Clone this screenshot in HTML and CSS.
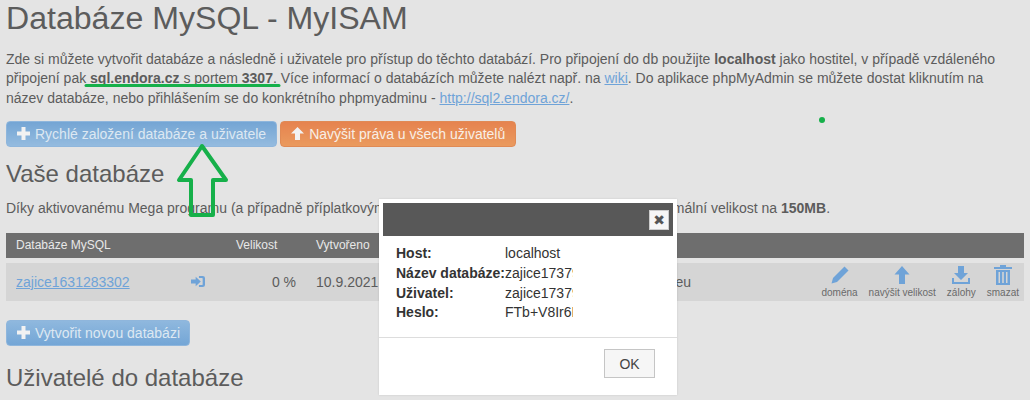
FILE: index.html
```html
<!DOCTYPE html>
<html lang="cs">
<head>
<meta charset="utf-8">
<title>Databáze MySQL - MyISAM</title>
<link rel="stylesheet" href="styles.css">
</head>
<body>
<main class="page">
  <h1 class="title">Databáze MySQL - MyISAM</h1>
  <p class="intro">Zde si můžete vytvořit databáze a následně i uživatele pro přístup do těchto databází. Pro připojení do db použijte <b>localhost</b> jako hostitel, v případě vzdáleného<br>připojení pak <b>sql.endora.cz</b> s portem <b>3307</b>. Více informací o databázích můžete nalézt např. na <a href="#">wiki</a>. Do aplikace phpMyAdmin se můžete dostat kliknutím na<br>název databáze, nebo přihlášením se do konkrétního phpmyadminu - <a href="#">http://sql2.endora.cz/</a>.</p>
  <div class="actions">
    <a class="btn btn-blue" href="#"><svg class="btn-icon" viewBox="0 0 13 13"><path d="M4.500 0h4v4.500H13v4H8.500V13h-4V8.500H0v-4h4.500z"/></svg>Rychlé založení databáze a uživatele</a>
    <a class="btn btn-orange" href="#"><svg class="btn-icon" viewBox="0 0 13 13"><path d="M6.500 0L13 6.500H9V13H4V6.500H0z"/></svg>Navýšit práva u všech uživatelů</a>
  </div>
  <h2 class="section-title">Vaše databáze</h2>
  <p class="note">Díky aktivovanému Mega programu (a případně příplatkovým balíčkům) máte také možnost navýšit na maximální velikost na <b>150MB</b>.</p>
  <div class="table">
    <div class="row row-head">
      <span class="c-name">Databáze MySQL</span>
      <span class="c-login"></span>
      <span class="c-size">Velikost</span>
      <span class="c-date">Vytvořeno</span>
    </div>
    <div class="row row-body">
      <a class="c-name db-link" href="#">zajice1631283302</a>
      <span class="c-login"><svg class="login-icon" viewBox="0 0 15 13" preserveAspectRatio="none"><path d="M0 4.200h5V1L10.500 6.500 5 12V8.800H0z"/><path d="M8.500 0H12.500A2.500 2.500 0 0 1 15 2.500v8A2.500 2.500 0 0 1 12.500 13H8.500v-2.500h3.500a.5 .5 0 0 0 .5-.5V3a.5 .5 0 0 0-.5-.5H8.500z"/></svg></span>
      <span class="c-size size-value">0 %</span>
      <span class="c-date">10.9.2021</span>
      <span class="c-host">zajice1631283302.mysql.endora.eu</span>
      <div class="tools">
        <a class="tool" href="#"><svg viewBox="0 0 20 20"><path d="M14.500 1.500l4 4L7 17 1.500 18.500 3 13z"/></svg>doména</a>
        <a class="tool" href="#"><svg viewBox="0 0 20 20"><path d="M10 1l7.500 8.500H13V19H7V9.500H2.500z"/></svg>navýšit velikost</a>
        <a class="tool" href="#"><svg viewBox="0 0 20 20"><path d="M7 1h6v7h4l-7 7-7-7h4z"/><path d="M1 13h2v4h14v-4h2v6H1z"/></svg>zálohy</a>
        <a class="tool" href="#"><svg viewBox="0 0 20 20"><path d="M7 0h6v2h6v2H1V2h6z"/><path fill-rule="evenodd" d="M3 5h14v15H3zM5.500 7v11h1.500V7zM9.200 7v11h1.600V7zM13 7v11h1.500V7z"/></svg>smazat</a>
      </div>
    </div>
  </div>
  <a class="btn btn-blue-alt" href="#"><svg class="btn-icon" viewBox="0 0 13 13"><path d="M4.500 0h4v4.500H13v4H8.500V13h-4V8.500H0v-4h4.500z"/></svg>Vytvořit novou databázi</a>
  <h2 class="section-title section-users">Uživatelé do databáze</h2>
</main>

<svg class="marks" viewBox="0 0 1030 400" aria-hidden="true">
  <path class="mark-line" d="M86 85.500H279"/>
  <path class="mark-arrow" d="M202 146L179 180H191V215H213V180H226Z"/>
  <circle class="mark-dot" cx="822" cy="120" r="3"/>
</svg>

<div class="modal" role="dialog">
  <div class="modal-head"><button class="modal-close" type="button">✖</button></div>
  <dl class="modal-body">
    <dt>Host:</dt><dd>localhost</dd>
    <dt>Název databáze:</dt><dd>zajice17379</dd>
    <dt>Uživatel:</dt><dd>zajice17379</dd>
    <dt>Heslo:</dt><dd>FTb+V8Ir6Kd</dd>
  </dl>
  <div class="modal-foot"><button class="modal-ok" type="button">OK</button></div>
</div>
</body>
</html>
```
FILE: styles.css
```css
* { box-sizing: border-box; }
html, body { margin: 0; height: 400px; overflow: hidden; }
body {
  background: #e4e4e4;
  color: #5c5c5c;
  font-family: "Liberation Sans", Arial, sans-serif;
  font-size: 14px;
  position: relative;
}
.page { padding: 0 6px; }
.title {
  margin: 0;
  font-size: 32.100px;
  font-weight: 400;
  line-height: 36px;
  color: #5c5c5c;
}
.intro {
  margin: 13.600px 0 0;
  line-height: 19.500px;
  height: 59px;
  white-space: nowrap;
  font-size: 14px;
}
.intro a, .db-link { color: #6fa3d8; text-decoration: underline; }
.actions { display: flex; gap: 3px; margin-top: 12.400px; }
.btn {
  display: inline-flex;
  align-items: center;
  height: 26px;
  padding: 0 10px;
  border-radius: 4px;
  color: #dde8f2;
  font-size: 14px;
  text-decoration: none;
  white-space: nowrap;
}
.btn-icon { width: 13px; height: 13px; margin-right: 5px; fill: #f2f2f2; flex: none; }
.btn-blue { background: linear-gradient(#74a5d4, #94bbdf); border: 1px solid #8fb6dc; }
.btn-orange { background: linear-gradient(#e6834f, #ea9a5e); border: 1px solid #e08a55; color: #f8efe6; }
.btn-blue-alt {
  background: linear-gradient(#8fb8de, #74a6d6);
  border: 1px solid #8fb6dc;
  margin-top: 19px;
  width: 184px;
}
.section-title {
  margin: 0;
  font-size: 24px;
  font-weight: 400;
  line-height: 28px;
  color: #5c5c5c;
}
.actions + .section-title { margin-top: 13px; }
.section-users { margin-top: 18px; }
.note { margin: 10px 0 0; line-height: 20px; height: 20px; white-space: nowrap; }
.table { margin-top: 15px; }
.row {
  display: grid;
  grid-template-columns: 170px 50px 80px 79px 296px 1fr;
  align-items: center;
  padding-left: 10px;
}
.row-head {
  height: 25px;
  background: #6e6e6e;
  color: #e8e8e8;
  font-size: 12px;
}
.row-body {
  height: 38px;
  margin-top: 5px;
  background: #d5d5d5;
}
.size-value { text-align: right; padding-right: 20px; }
.c-login { display: flex; padding-left: 5px; }
.c-host { text-align: right; white-space: nowrap; }
.login-icon { width: 14px; height: 11px; fill: #6fa3d8; }
.tools { display: flex; gap: 11px; padding-right: 5px; justify-content: flex-end; }
.tool {
  display: flex;
  flex-direction: column;
  align-items: center;
  font-size: 10px;
  line-height: 11px;
  color: #6a6a6a;
  text-decoration: none;
  white-space: nowrap;
}
.tool svg { width: 20px; height: 20px; fill: #6fa3d8; margin-bottom: 2px; }
.marks { position: absolute; left: 0; top: 0; width: 1030px; height: 400px; pointer-events: none; }
.mark-line { stroke: #16b04a; stroke-width: 3px; fill: none; stroke-linecap: round; }
.mark-arrow { stroke: #16b04a; stroke-width: 4px; fill: none; stroke-linejoin: round; }
.mark-dot { fill: #16b04a; }
.modal {
  position: absolute;
  left: 379px;
  top: 199px;
  width: 298px;
  height: 196px;
  background: #fff;
  padding: 4px;
  color: #333;
  box-shadow: 0 0 2px rgba(0,0,0,.12);
}
.modal-head {
  height: 33px;
  background: #585858;
  display: flex;
  justify-content: flex-end;
  align-items: center;
  padding-right: 4px;
  margin-bottom: 7.400px;
}
.modal-close {
  width: 20px;
  height: 20px;
  padding: 0;
  border: 1px solid #ccc;
  background: #f6f6f6;
  color: #555;
  font-size: 14px;
  line-height: 18px;
  font-family: "DejaVu Sans", sans-serif;
}
.modal-body {
  display: grid;
  grid-template-columns: 109px 68px;
  margin: 0 0 0 13px;
  grid-auto-rows: 19.700px;
  align-items: center;
}
.modal-body dt { font-weight: 700; white-space: nowrap; }
.modal-body dd { margin: 0; overflow: hidden; white-space: nowrap; }
.modal-foot {
  position: absolute;
  left: 0;
  right: 0;
  top: 138px;
  height: 58px;
  border-top: 1px solid #ddd;
  padding: 11px 22px 0 0;
  display: flex;
  justify-content: flex-end;
  align-items: flex-start;
}
.modal-ok {
  width: 51px;
  height: 29px;
  border: 1px solid #c5c5c5;
  background: #f6f6f6;
  color: #444;
  font: 14px "Liberation Sans", Arial, sans-serif;
}
```
